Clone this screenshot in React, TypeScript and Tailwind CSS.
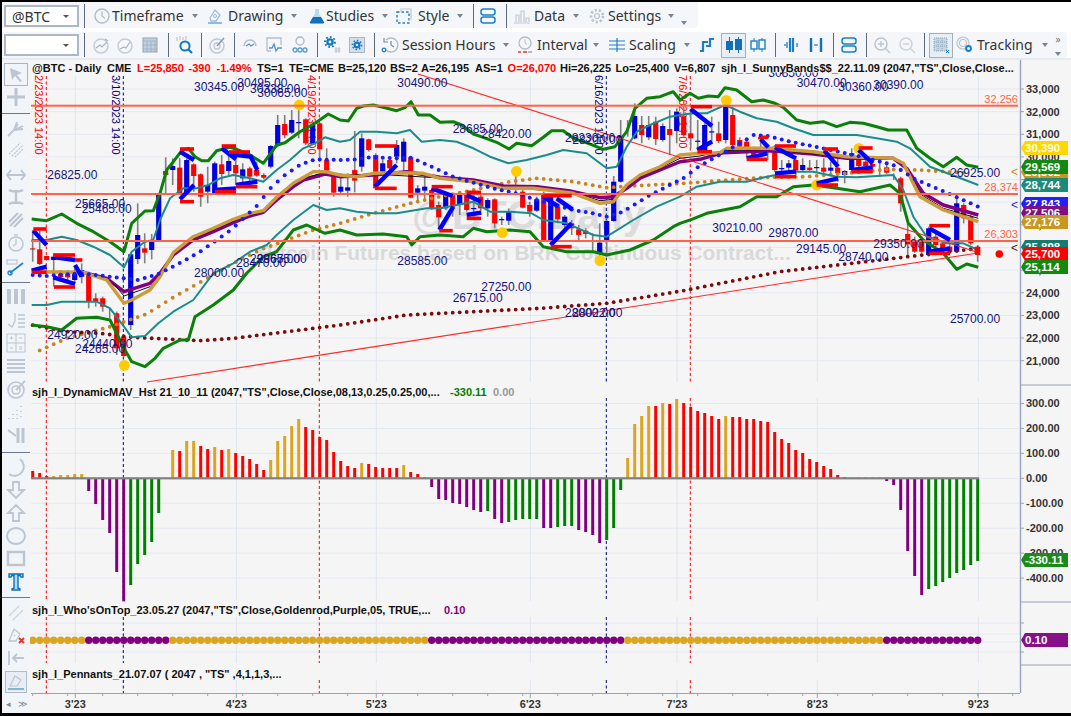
import React from "react";

type P = [number, number];
const t = (ox: number, pts: P[]): P[] => pts.map(([x, y]) => [ox + x / 3, 60 + y / 3]);
const poly = (...a: P[][]) => a.flat().map(([x, y]) => `${x.toFixed(1)},${y.toFixed(1)}`).join(" ");
const bx = (i: number) => 32.7 + 7 * i;

const greenUp: P[][] = [
  t(0, [[95,477],[140,482],[185,462],[230,490],[280,515],[330,545],[372,575],[395,490],[435,453],[460,452],[480,400],[500,330],[520,305],[545,272],[565,265],[585,290],[605,302],[625,302],[650,272],[690,262],[710,268],[750,285],[790,310],[830,255],[855,248],[900,215],[945,190],[985,162]]),
  t(340, [[0,180],[25,183],[50,145],[70,138],[100,135],[135,143],[170,152],[195,143],[213,125],[235,165],[270,165],[300,187],[340,185],[365,195],[400,222],[430,232],[470,247],[507,267],[530,250],[575,257],[610,232],[635,212],[670,212],[700,235],[745,250],[790,268],[825,260],[860,215],[885,145],[920,115],[960,110],[1000,95]]),
  t(680, [[0,120],[30,100],[55,115],[85,108],[115,110],[135,83],[170,90],[215,125],[250,120],[285,130],[310,142],[350,180],[390,190],[430,185],[470,200],[510,187],[550,190],[590,200],[625,210],[680,210],[710,265],[750,295],[790,320],[830,292],[860,315],[895,322]]),
];
const tealUp: P[][] = [
  t(0, [[95,540],[140,540],[185,530],[230,540],[280,560],[330,585],[372,622],[395,575],[435,545],[460,540],[480,480],[510,415],[550,385],[590,385],[625,375],[660,355],[700,345],[750,355],[790,365],[830,330],[870,300],[910,265],[945,250],[975,232]]),
  t(340, [[0,245],[30,240],[60,215],[110,215],[170,220],[210,210],[245,245],[300,240],[350,245],[400,265],[450,290],[505,310],[560,300],[620,285],[670,270],[740,280],[800,325],[830,320],[860,260],[890,215],[930,195],[990,170]]),
  t(680, [[0,165],[40,160],[80,160],[135,135],[180,155],[230,175],[290,185],[340,205],[400,225],[460,225],[530,225],[590,235],[650,245],[690,265],[750,320],[830,350],[895,375]]),
];
const gold: P[][] = [
  t(0, [[95,635],[250,637],[320,660],[372,730],[395,720],[450,690],[480,650],[520,578],[580,530],[640,505],[700,478],[750,460],[790,452],[830,412],[880,370],[940,335],[975,335]]),
  t(340, [[0,345],[50,350],[100,340],[170,338],[250,340],[300,355],[400,365],[490,385],[580,385],[700,400],[780,430],[820,425],[860,375],[900,345],[960,320]]),
  t(680, [[0,285],[60,280],[120,278],[140,265],[270,265],[400,275],[500,290],[640,295],[670,310],[720,410],[790,450],[895,485]]),
];
const purple: P[][] = [
  t(0, [[250,637],[320,655],[372,695],[450,670],[480,640],[520,585],[580,540],[640,515],[700,488],[750,468],[790,457],[830,420],[880,380],[910,360],[975,342]]),
  t(340, [[0,350],[100,345],[200,335],[300,352],[400,360],[490,378],[590,380],[690,393],[780,413],[820,410],[860,385],[900,355],[960,330]]),
  t(680, [[0,305],[60,298],[130,278],[270,272],[400,282],[500,295],[640,295],[680,325],[730,400],[790,435],[895,465]]),
];
const black: P[][] = [
  t(0, [[340,670],[372,708],[450,680],[480,650],[520,582],[580,535],[640,510],[700,483],[750,464],[790,455],[830,416],[880,375],[910,355],[975,337]]),
  t(340, [[0,347],[100,342],[300,354],[490,382],[700,397],[780,422],[820,418],[860,380],[900,350],[960,325]]),
  t(680, [[0,295],[60,288],[130,272],[270,268],[500,292],[640,295],[675,318],[725,405],[790,445],[895,475]]),
];
const tealDn: P[][] = [
  t(0, [[95,735],[140,735],[185,725],[230,725],[290,725],[330,745],[372,800],[395,832],[435,828],[475,790],[520,755],[580,720],[640,640],[700,610],[750,575],[800,555],[830,525],[880,480],[940,435],[980,450]]),
  t(340, [[0,445],[50,455],[100,460],[170,460],[260,445],[300,445],[400,425],[450,455],[510,455],[575,460],[610,480],[680,490],[760,525],[800,530],[880,480],[950,440]]),
  t(680, [[0,410],[50,380],[120,365],[200,365],[260,350],[340,335],[400,335],[470,350],[530,352],[640,345],[670,390],[700,470],[740,530],[800,550],[850,550],[895,570]]),
];
const greenDn: P[][] = [
  t(0, [[95,795],[140,800],[185,810],[230,775],[290,772],[330,780],[372,865],[395,905],[435,920],[465,895],[490,865],[540,840],[565,840],[585,770],[640,735],[700,690],[740,640],[790,590],[830,575],[880,510],[920,495],[975,520]]),
  t(340, [[0,510],[50,525],[130,522],[200,530],[215,555],[240,530],[300,525],[370,530],[400,505],[440,515],[510,510],[570,515],[610,560],[680,575],[760,575],[800,585],[870,570],[940,540],[1000,500]]),
  t(680, [[0,490],[35,478],[80,460],[130,450],[180,440],[230,410],[290,410],[340,380],[400,375],[470,385],[540,395],[630,375],[660,400],[685,490],[730,540],[790,580],[830,628],[860,612],[895,622]]),
];

const interp = (pts: P[], from: number, to: number) => {
  const out: P[] = [];
  for (let i = from; i <= to; i++) {
    const x = bx(i);
    for (let k = 0; k < pts.length - 1; k++) {
      if (x >= pts[k][0] && x <= pts[k + 1][0]) {
        const f = (x - pts[k][0]) / (pts[k + 1][0] - pts[k][0]);
        out.push([x, pts[k][1] + f * (pts[k + 1][1] - pts[k][1])]);
        break;
      }
    }
  }
  return out;
};
const blueDots = interp([
  ...t(0, [[95,645],[135,648],[245,640],[415,660],[480,640],[560,598],[600,575],[690,512],[730,475],[770,438],[815,380],[855,345],[900,315],[945,298]]),
  ...t(340, [[0,300],[50,298],[90,292],[170,295],[215,293],[300,332],[340,350],[400,368],[460,385],[530,400],[590,420],[700,450],[760,460],[800,470],[845,457],[890,430],[930,405],[970,385]]),
  ...t(680, [[15,352],[55,320],[100,295],[180,250],[220,225],[265,228],[330,245],[430,265],[520,285],[640,315],[700,355],[770,385],[895,440]]),
], 0, 135);
const orangeDots = interp([
  ...t(0, [[100,880],[200,835],[330,800],[440,762],[520,712],[630,650],[700,610],[780,570],[860,540],[940,510]]),
  ...t(340, [[0,490],[100,460],[210,430],[300,410],[400,390],[510,365],[590,355],[700,365],[800,383],[870,378]]),
  ...t(680, [[10,370],[120,362],[260,352],[380,350],[500,340],[620,328],[720,330],[880,340]]),
], 1, 133);
const redDots = interp([
  ...t(0, [[95,795],[200,815],[300,820],[400,832],[600,842],[700,835],[820,820]]),
  ...t(340, [[0,795],[200,765],[400,755],[600,745],[800,730]]),
  ...t(680, [[10,692],[300,635],[600,600],[895,565]]),
], 0, 135);

const C: [number, "r" | "b" | "", number, number, number?, number?][] = [
  [0,"r",565,566,510,605],[1,"r",568,612,505,615],[2,"r",588,600],[3,"b",590,600,580,680],[4,"r",640,652,630,665],[5,"r",640,652,630,665],[6,"b",640,660,625,670],[7,"b",630,650,610,670],
  [8,"r",640,725,635,745],[9,"r",715,725,700,740],[10,"r",715,740,710,755],[11,"",0,0,745,775],[12,"r",760,865,755,885],[13,"r",830,888,825,892],[14,"b",583,795,580,810],[15,"b",525,597,430,612],[16,"r",565,578,520,610],[17,"b",540,570,522,598],[18,"b",405,540,400,542],[19,"r",333,345,292,400],
  [20,"b",318,330,295,375],[21,"r",323,400,295,405],[22,"b",300,400,295,405],[23,"r",313,348,310,395],[24,"r",343,410,340,440],[25,"b",375,395,320,430],[26,"b",310,400,305,405],[27,"r",313,342,285,375],[28,"b",303,333,285,345],[29,"r",315,340,290,375],
  [30,"b",328,355,310,370],[31,"r",325,350,320,375],[32,"r",330,347,305,350],[33,"r",345,353,340,358],[34,"b",258,320,255,325],[35,"b",195,258,165,262],[36,"r",192,225,165,235],[37,"b",180,218,150,222],[38,"b",186,188,150,235],[39,"r",178,250,175,255],
  [40,"b",195,250,185,255],[41,"r",190,268,188,295],[42,"r",300,332,265,340],[43,"r",345,398,340,410],
  [44,"b",380,395,340,400],[45,"b",382,392,340,410],[46,"r",330,362,213,397],[47,"b",235,320,220,335],[48,"r",238,270,236,275],[49,"r",285,385,280,390],[50,"b",310,335,300,345],[51,"r",300,325,290,345],[52,"b",255,290,240,310],[53,"b",245,305,235,335],[54,"r",292,413,290,415],
  [55,"b",385,398,375,425],[56,"b",380,392,345,425],[57,"r",390,445,385,450],[58,"r",435,472,425,505],[59,"b",405,445,400,450],[60,"r",405,440,400,470],[61,"b",405,435,395,465],[62,"r",405,450,400,455],[63,"b",444,446,405,470],[64,"r",410,445,405,465],
  [65,"b",420,445,415,470],[66,"r",418,490,415,505],[67,"b",477,479,470,495],[68,"b",455,482,445,495],[69,"",0,0,345,400],[70,"r",395,443,390,445],[71,"r",435,455,425,470],[72,"b",418,452,410,455],[73,"r",400,540,395,542],[74,"b",410,540,405,545],
  [75,"r",440,478,430,490],[76,"b",470,495,465,520],[77,"r",490,505,480,525],[78,"r",508,525,495,540],[79,"r",512,522,505,535],[80,"",0,0,520,575],[81,"b",548,580,490,590],[82,"b",483,540,480,590],[83,"b",365,483,348,485],[84,"b",228,365,180,368],[85,"",0,0,180,230],
  [86,"b",168,235,130,238],[87,"r",195,225,168,250],[88,"b",195,232,168,240],[89,"r",185,237,170,255],[90,"b",198,240,190,245],[91,"r",207,225,150,285],[92,"b",155,213,145,250],
  [93,"r",170,225,120,230],[94,"r",220,235,150,265],[95,"b",242,244,180,270],[96,"b",195,270,190,275],[97,"b",214,216,170,250],[98,"r",220,243,185,250],[99,"b",140,240,135,250],[100,"r",165,255,140,258],[101,"r",240,260,232,265],[102,"r",245,262,235,290],
  [103,"r",265,295,260,300],[104,"r",230,238,228,270],[105,"",0,0,265,300],[106,"r",260,330,255,335],[107,"b",324,326,300,335],[108,"b",310,323,300,335],[109,"r",300,332,295,345],[110,"b",315,330,295,335],[111,"r",323,330,300,335],[112,"b",321,323,300,335],
  [113,"r",323,335,295,345],[114,"b",323,332,305,345],[115,"r",323,340,290,365],[116,"b",333,345,330,370],[117,"b",280,330,265,335],[118,"r",300,318,280,322],[119,"r",305,318,290,325],[120,"r",312,320,300,325],[121,"",0,0,300,350],[122,"r",322,338,315,342],[123,"",0,0,340,360],
  [124,"r",355,430,350,455],[125,"r",522,553,490,590],[126,"r",540,575,530,578],[127,"r",545,575,540,580],[128,"b",505,585,500,590],[129,"r",530,555,510,565],[130,"r",550,565,540,570],[131,"r",560,575,550,580],[132,"b",430,575,405,578],[133,"r",435,475,430,490],[134,"r",470,550,465,555],[135,"r",560,585,555,605],
];

const redBars: [number, number, number, number][] = [];
const blues: [number, number, number, number, number][] = [];
const addR = (ox: number, a: number[][]) => a.forEach(([x1, x2, y]) => redBars.push([ox + x1 / 3, ox + x2 / 3, 60 + y / 3, 0]));
const addB = (ox: number, a: number[][]) => a.forEach(([x1, y1, x2, y2]) => blues.push([ox + x1 / 3, 60 + y1 / 3, ox + x2 / 3, 60 + y2 / 3, 0]));
addR(0, [[100,140,507],[160,225,585],[225,247,600],[162,225,681],[540,582,267],[540,582,425],[665,708,258],[687,750,276],[645,708,395],[708,772,380],[95,140,637]]);
addB(0, [[100,512,140,555],[95,632,140,620],[165,592,225,600],[225,615,245,650],[160,652,225,672],[540,275,582,300],[540,418,582,375],[665,265,708,298],[687,282,750,290],[750,285,772,330],[645,390,708,385],[708,375,772,365]]);
addR(340, [[105,170,258],[105,170,385],[275,338,380],[298,338,512],[380,423,397],[380,423,475],[610,695,407],[632,695,560]]);
addB(340, [[105,380,170,315],[275,385,338,408],[298,510,340,440],[380,405,423,425],[380,465,423,458],[610,410,655,440],[650,415,697,448],[632,555,695,490]]);
addR(680, [[32,96,140],[52,96,275],[200,262,298],[242,265,232],[285,348,258],[285,348,350],[430,474,267],[410,474,375],[536,578,264],[515,578,335],[748,810,497],[748,810,580]]);
addB(680, [[32,147,96,198],[52,270,96,245],[200,295,262,280],[242,238,265,262],[285,262,348,295],[285,340,348,335],[433,272,474,320],[410,370,474,355],[536,270,578,310],[515,330,578,322],[748,505,810,540],[748,575,810,565]]);

const circles: P[] = [...t(0, [[373,916],[898,135]]), ...t(340, [[529,334],[487,518],[780,602]]), ...t(680, [[139,121],[410,375],[537,265]])];

const H = "273r 279r 288r 288g 285g 285g 282g 282g 333p 372p 420p 459p 576p 664p 615G 552G 525G 486G 399G 297G 210g 213r 183g 183g 198r 207r 201g 210r 207g 219r 228r 237r 252r 270r 240g 183g 168g 138g 117g 141r 150r 171r 180r 216r 243r 258r 264r 249g 252r 261r 264r 264r 264r 255g 276r 282r 292r 321p 357p 360p 369p 372p 381p 390p 396p 393G 417p 429p 426G 420G 417G 417G 417G 444p 444p 441G 438G 438G 450p 456p 465p 489p 480G 444G 330G 234g 132g 108g 78g 78r 69g 72r 57g 69r 81r 93r 99r 108r 117r 108g 111r 111r 117r 117r 123r 126r 156r 177r 189r 210r 219r 237r 246r 258r 267r 285r 292r 293g 293r 293r 293r 293r 303p 315p 390p 513p 588p 645p 627G 618G 606G 594G 579G 570G 555G 543G".split(" ");
const hCol: Record<string, string> = { r: "#ff0000", g: "#daa520", p: "#800080", G: "#008000" };

const labels: [number, number, string][] = [
  ...([[142,357,"26825.00"],[225,444,"25665.00"],[245,458,"25465.00"],[582,650,"28000.00"],[708,620,"28470.00"],[750,608,"29865.00"],[770,608,"29675.00"],[142,836,"24920.00"],[247,865,"24440.00"],[225,880,"24265.00"],[582,92,"30345.00"],[712,82,"30495.00"],[750,98,"30338.00"],[772,112,"30065.00"]] as [number,number,string][]).map(([x,y,s]) => [x/3, 60+y/3, s] as [number,number,string]),
  ...([[172,82,"30490.00"],[338,218,"28685.00"],[424,235,"28420.00"],[675,245,"28230.00"],[697,252,"28200.00"],[172,614,"28585.00"],[424,694,"27250.00"],[338,727,"26715.00"],[675,770,"28000.00"],[697,770,"28022.00"]] as [number,number,string][]).map(([x,y,s]) => [340+x/3, 60+y/3, s] as [number,number,string]),
  ...([[265,52,"30850.00"],[350,82,"30470.00"],[475,92,"30360.00"],[580,88,"30390.00"],[810,350,"26925.00"],[97,515,"30210.00"],[265,532,"29870.00"],[348,578,"29145.00"],[580,565,"29350.00"],[475,602,"28740.00"],[810,788,"25700.00"]] as [number,number,string][]).map(([x,y,s]) => [680+x/3, 60+y/3, s] as [number,number,string]),
];

const segs = [[76, 382], [398, 601], [617, 663], [680, 693]];
const months: [number, string][] = [[75.3, "3'23"], [236.3, "4'23"], [376.3, "5'23"], [530.3, "6'23"], [677, "7'23"], [817.3, "8'23"], [978.3, "9'23"]];
const vmarks: [number, string, string][] = [[46.3, "#ff0000", "2/23/2023 14:00"], [123.3, "#000080", "3/10/2023 14:00"], [319.3, "#ff0000", "4/19/2023 14:00"], [606.3, "#000080", "6/16/2023 14:00"], [690.3, "#ff0000", "7/6/2023 14:00"]];
const prices = [33, 32, 31, 30, 29, 28, 27, 26, 25, 24, 23, 22, 21];
const py = (k: number) => 89 + (33 - k) * 22.64;
const hVals = [300, 200, 100, 0, -100, -200, -300, -400];
const hy = (v: number) => 478.3 - v * 0.2495;

const badges: [number, string, string, string][] = [
  [148, "#ffd700", "30,390", "#fffde0"],
  [172, "#c9971f", "29,302", "#ffffff"],
  [167, "#0f8a0f", "29,569", "#ffffff"],
  [185, "#1b8a7a", "28,744", "#ffffff"],
  [204, "#1f1fff", "27,843", "#ffffff"],
  [213, "#800f80", "27,506", "#ffffff"],
  [222, "#c9971f", "27,176", "#ffffff"],
  [247, "#177a6e", "25,898", "#ffffff"],
  [254, "#ff0000", "25,700", "#ffffff"],
  [267, "#0f8a0f", "25,114", "#ffffff"],
  [560, "#1a8a1a", "-330.11", "#ffffff"],
  [640, "#870f87", "0.10", "#ffffff"],
];

function Chart() {
  return (
    <svg width={1041} height={653} viewBox="30 60 1041 653" className="block font-['Liberation_Sans',Arial,sans-serif]">
      <rect x={30} y={60} width={1041} height={653} fill="#f5f5f5" />
      {/* grid */}
      {prices.map((k) => <line key={k} x1={31} x2={1020} y1={py(k)} y2={py(k)} stroke="#e4e8f2" />)}
      {hVals.map((v) => <line key={v} x1={31} x2={1020} y1={hy(v)} y2={hy(v)} stroke="#e4e8f2" />)}
      {[623, 634, 642, 652].map((y) => <line key={y} x1={31} x2={1020} y1={y} y2={y} stroke="#e4e8f2" />)}
      {months.map(([x]) => segs.map(([a, b]) => <line key={x + "-" + a} x1={x} x2={x} y1={a} y2={b} stroke="#e0e5f0" />))}
      {/* watermark */}
      <text x={412} y={229} fontSize={41} fontWeight={700} fill="#dcdcdc">@BTC,Daily</text>
      <text x={258} y={260} fontSize={20.9} fontWeight={700} fill="#d9d9d9">Bitcoin Futures based on BRK Continuous Contract...</text>
      {/* dashed verticals */}
      {vmarks.map(([x, c]) => segs.map(([a, b]) => <line key={x + "d" + a} x1={x} x2={x} y1={a} y2={b} stroke={c} strokeDasharray="3 2.5" />))}
      {vmarks.map(([x, c, s]) => <text key={s} transform={`translate(${x - 11.5} 75) rotate(90)`} fontSize={11} fill={c}>{s}</text>)}
      {/* candles */}
      {C.map(([i, c, a, b, w1, w2]) => (
        <g key={i}>
          {w1 !== undefined && <rect x={bx(i) - 0.8} y={60 + w1 / 3} width={1.6} height={(w2! - w1) / 3} fill="#808080" />}
          {c && <rect x={bx(i) - 2.6} y={60 + a / 3} width={5.2} height={Math.max((b - a) / 3, 1.2)} fill={c === "r" ? "#ff0000" : "#0000dd"} />}
        </g>
      ))}
      {/* dots */}
      {orangeDots.map(([x, y], i) => <circle key={i} cx={x} cy={y} r={1.9} fill="#c8831c" />)}
      {redDots.map(([x, y], i) => <circle key={i} cx={x} cy={y} r={1.9} fill="#7a0c0c" />)}
      {/* bands */}
      <polyline points={poly(...greenUp)} fill="none" stroke="#0a800a" strokeWidth={3} strokeLinejoin="round" />
      <polyline points={poly(...greenDn)} fill="none" stroke="#0a800a" strokeWidth={3} strokeLinejoin="round" />
      <polyline points={poly(...tealUp)} fill="none" stroke="#1a8c8c" strokeWidth={2} strokeLinejoin="round" />
      <polyline points={poly(...tealDn)} fill="none" stroke="#1a8c8c" strokeWidth={2} strokeLinejoin="round" />
      <polyline points={poly(...purple)} fill="none" stroke="#800080" strokeWidth={3.4} strokeLinejoin="round" />
      <polyline points={poly(...black)} fill="none" stroke="#111111" strokeWidth={1} strokeLinejoin="round" />
      <polyline points={poly(...gold)} fill="none" stroke="#cc9c3a" strokeWidth={3.4} strokeLinejoin="round" />
      {blueDots.map(([x, y], i) => <circle key={i} cx={x} cy={y} r={2} fill="#1a1aff" />)}
      {circles.map(([x, y], i) => <circle key={i} cx={x} cy={y} r={5.4} fill="#ffcc00" />)}
      {/* trend lines */}
      <line x1={418} y1={74} x2={980} y2={253} stroke="#ff2a2a" strokeWidth={1.1} />
      <line x1={147} y1={382} x2={978} y2={253} stroke="#ff2a2a" strokeWidth={1.1} />
      {/* horizontals */}
      {[105.7, 194, 241].map((y) => <rect key={y} x={31} y={y - 1} width={987} height={2} fill="#ff6347" />)}
      {/* pennants */}
      {blues.map(([a, b, c, d], i) => <line key={i} x1={a} y1={b} x2={c} y2={d} stroke="#0000ff" strokeWidth={4.4} />)}
      {redBars.map(([a, b, y], i) => <rect key={i} x={a} y={y - 1.8} width={b - a} height={3.6} fill="#ff0000" />)}
      {/* value labels */}
      {labels.map(([x, y, s], i) => <text key={i} x={x} y={y} fontSize={12} fill="#14147e">{s}</text>)}
      <rect x={31} y={60} width={989} height={12.5} fill="#f5f5f5" />
      {/* coral */}
      {([["32,256", 105.7], ["28,374", 194], ["26,303", 241]] as [string, number][]).map(([s, y]) => <text key={s} x={1018} y={y - 3} textAnchor="end" fontSize={11} fill="#ff6347">{s}</text>)}
      {/* headers */}
      <g fontSize={11} fontWeight={700} fill="#111111">
        <text y={72}>
          <tspan x={32}>@BTC - Daily</tspan><tspan x={107}>CME</tspan>
          <tspan x={137} fill="#ff0000">L=25,850</tspan><tspan x={188.6} fill="#ff0000">-390</tspan><tspan x={216.6} fill="#ff0000">-1.49%</tspan>
          <tspan x={257}>TS=1</tspan><tspan x={289}>TE=CME</tspan><tspan x={338}>B=25,120</tspan><tspan x={390}>BS=2</tspan><tspan x={421}>A=26,195</tspan><tspan x={475}>AS=1</tspan>
          <tspan x={507.6} fill="#ff0000">O=26,070</tspan><tspan x={560}>Hi=26,225</tspan><tspan x={615.5}>Lo=25,400</tspan><tspan x={674}>V=6,807</tspan>
          <tspan x={721}>sjh_I_SunnyBands$$_22.11.09 (2047,"TS",Close,Close...</tspan>
        </text>
        <text y={396}>
          <tspan x={32}>sjh_I_DynamicMAV_Hst 21_10_11 (2047,"TS",Close,Close,08,13,0.25,0.25,00,...</tspan>
          <tspan x={450} fill="#008000">-330.11</tspan><tspan x={493} fill="#999999">0.00</tspan>
        </text>
        <text y={614}>
          <tspan x={32}>sjh_I_Who'sOnTop_23.05.27 (2047,"TS",Close,Goldenrod,Purple,05,  TRUE,...</tspan>
          <tspan x={444} fill="#800080">0.10</tspan>
        </text>
        <text x={32} y={678}>sjh_I_Pennants_21.07.07 ( 2047 , "TS" ,4,1,1,3,...</text>
      </g>
      {/* histogram */}
      {H.map((s, i) => {
        const y = parseInt(s);
        const c = s[s.length - 1];
        const a = Math.min(y, 295);
        const b = Math.max(y, 295);
        return <rect key={i} x={bx(i) - 1.5} y={380 + a / 3} width={3} height={(b - a) / 3} fill={hCol[c]} />;
      })}
      <rect x={31} y={477.2} width={948} height={2.2} fill="#808080" />
      {/* dot strip */}
      {H.map((_, i) => {
        const p = (i >= 8 && i <= 19) || (i >= 57 && i <= 84) || i >= 122;
        return <circle key={i} cx={bx(i)} cy={640.3} r={3.7} fill={p ? "#800080" : "#daa520"} />;
      })}
      {/* axes */}
      <line x1={1020.5} x2={1020.5} y1={60} y2={693} stroke="#98a2b8" strokeWidth={1.4} />
      <line x1={31} x2={1020} y1={693.5} y2={693.5} stroke="#98a2b8" strokeWidth={1.2} />
      {[385, 602, 665].map((y) => <line key={y} x1={1020} x2={1071} y1={y} y2={y} stroke="#98a2b8" strokeWidth={1.2} />)}
      {Array.from({ length: 29 }, (_, k) => <line key={k} x1={32.7 + 35 * k} x2={32.7 + 35 * k} y1={693} y2={696} stroke="#98a2b8" />)}
      {months.map(([x, s]) => (
        <g key={s}>
          <line x1={x} x2={x} y1={693} y2={698} stroke="#98a2b8" />
          <text x={x} y={707.5} textAnchor="middle" fontSize={11} fontWeight={700} fill="#333333">{s}</text>
        </g>
      ))}
      {prices.map((k) => (
        <g key={k}>
          <line x1={1020} x2={1024} y1={py(k)} y2={py(k)} stroke="#98a2b8" />
          <text x={1026} y={py(k) + 4} fontSize={11} fontWeight={700} fill="#333333">{k},000</text>
        </g>
      ))}
      {hVals.map((v) => (
        <g key={v}>
          <line x1={1020} x2={1024} y1={hy(v)} y2={hy(v)} stroke="#98a2b8" />
          <text x={1026} y={hy(v) + 4} fontSize={11} fontWeight={700} fill="#333333">{v.toFixed(2)}</text>
        </g>
      ))}
      {[623, 652].map((y) => <line key={y} x1={1020} x2={1024} y1={y} y2={y} stroke="#98a2b8" />)}
      {/* markers */}
      <text x={1011} y={176} fontSize={12} fill="#cc8822">&lt;</text>
      <text x={1011} y={209} fontSize={12} fill="#2222ff">&lt;</text>
      <text x={1011} y={252} fontSize={12} fill="#551111">&lt;</text>
      <circle cx={999.3} cy={254} r={3.8} fill="#ff0000" />
      <rect x={974.5} y={247} width={5} height={7} fill="#ff0000" />
      {/* badges */}
      {badges.map(([y, c, s, tc]) => (
        <g key={s}>
          <polygon points={`1021,${y} 1025,${y - 7} 1068,${y - 7} 1068,${y + 7} 1025,${y + 7}`} fill={c} />
          <text x={1025} y={y + 4.2} fontSize={11.5} fontWeight={700} fill={tc}>{s}</text>
        </g>
      ))}
    </svg>
  );
}

/* ---------- toolbar icons ---------- */
const BLUE = "#1c7fc6";
const Ico = ({ className = "", children }: { className?: string; children: React.ReactNode }) => (
  <svg width={18} height={18} viewBox="0 0 18 18" fill="none" className={"shrink-0 " + className}>{children}</svg>
);
const Caret = ({ className = "" }: { className?: string }) => (
  <span className={"shrink-0 w-0 h-0 border-x-[3.5px] border-x-transparent border-t-[4px] border-t-[#7a8490] " + className} />
);
const Sep = ({ className = "" }: { className?: string }) => <span className={"shrink-0 w-px h-[24px] bg-[#5c6b7c] " + className} />;
const Label = ({ className = "", children }: { className?: string; children: React.ReactNode }) => (
  <span className={"shrink-0 text-[14px] leading-none text-[#333333] whitespace-nowrap " + className}>{children}</span>
);
const Combo = ({ children }: { children?: React.ReactNode }) => (
  <div className="shrink-0 w-[75px] h-[22px] ml-[2px] bg-white border-2 border-[#aeb8c4] flex items-center pl-[6px] pr-[8px] text-[14px] text-[#333333]">
    <span className="flex-1">{children}</span>
    <span className="w-0 h-0 border-x-[3px] border-x-transparent border-t-[3px] border-t-[#555555]" />
  </div>
);

function Row1() {
  return (
    <div className="h-[30px] flex bg-white shrink-0">
      <div className="w-[696px] h-[26px] pt-[2px] bg-[#f4f6fa] rounded-br-[3px] flex items-center">
        <Combo>@BTC</Combo>
        <Sep className="ml-[5px]" />
        <Ico className="ml-[8px]"><circle cx="9" cy="9" r="7" stroke="#b4bcc4" strokeWidth="1.4" /><path d="M9 4.5V9l3 2.5" stroke="#b4bcc4" strokeWidth="1.3" /></Ico>
        <Label className="ml-px w-[72px]">Timeframe</Label>
        <Caret className="ml-[8px]" />
        <Ico className="ml-[8px]"><path d="M4 11 9 3l5 5-4 6H5z" stroke="#9cbfd8" strokeWidth="1.3" /><circle cx="9" cy="9" r="1.5" stroke="#9cbfd8" /><path d="M2 16h14" stroke="#6aa9d8" strokeWidth="1.5" /></Ico>
        <Label className="ml-[4px] w-[55px]">Drawing</Label>
        <Caret className="ml-[8px]" />
        <Ico className="ml-[11px]"><path d="M7 2h4v4.5l5 8.5a1 1 0 0 1-1 1.5H3a1 1 0 0 1-1-1.5l5-8.5z" fill="#bcd8ef" /><path d="M5 10h8l3 5a1 1 0 0 1-1 1.5H3A1 1 0 0 1 2 15z" fill="#1270b8" /></Ico>
        <Label className="w-[48px]">Studies</Label>
        <Caret className="ml-[8px]" />
        <Ico className="ml-[7px]"><rect x="2" y="5" width="12" height="11" stroke={BLUE} strokeWidth="1.4" strokeDasharray="2.5 2" /><path d="M6 5V2h10v10h-2" stroke="#c2c9d2" strokeWidth="1.2" /></Ico>
        <Label className="ml-[5px] w-[31px]">Style</Label>
        <Caret className="ml-[8px]" />
        <Sep className="ml-[10px]" />
        <Ico className="ml-[5px]"><rect x="2" y="2" width="14" height="6" rx="2.5" stroke={BLUE} strokeWidth="1.5" /><rect x="2" y="10" width="14" height="6" rx="2.5" stroke={BLUE} strokeWidth="1.5" /></Ico>
        <Sep className="ml-[9px]" />
        <Ico className="ml-[6px]"><path d="M3 15V8h3v7M8 15V4h3v11M13 15v-4h3v4" stroke="#c2c9d2" strokeWidth="1.2" /><path d="M1 16h16" stroke="#c2c9d2" /></Ico>
        <Label className="ml-[3px] w-[31px]">Data</Label>
        <Caret className="ml-[8px]" />
        <Ico className="ml-[9px]"><circle cx="9" cy="9" r="2.5" stroke="#b9c1ca" strokeWidth="1.2" /><circle cx="9" cy="9" r="6" stroke="#b9c1ca" strokeWidth="2.6" strokeDasharray="2.2 2" /></Ico>
        <Label className="ml-[2px] w-[52px]">Settings</Label>
        <Caret className="ml-[8px]" />
        <Caret className="ml-[7px] self-end mb-[3px]" />
      </div>
    </div>
  );
}

function Row2() {
  return (
    <div className="h-[26px] flex bg-white shrink-0">
      <div className="w-[1065px] h-[26px] bg-[#f4f6fa] rounded-r-[3px] flex items-center">
        <Combo />
        <Sep className="ml-[5px]" />
        <Ico className="ml-[7px]"><circle cx="9" cy="10" r="7" stroke="#c4ccd5" strokeWidth="1.5" /><path d="M4 12l4-3 2 2 5-5M13 3l3 2" stroke="#a8b5c2" strokeWidth="1.2" /></Ico>
        <Ico className="ml-[6px]"><circle cx="9" cy="10" r="7" stroke="#c4ccd5" strokeWidth="1.5" /><path d="M4 13l4-2 2 1 4-6" stroke="#a8b5c2" strokeWidth="1.2" /></Ico>
        <Ico className="ml-[7px]"><rect x="2" y="2" width="14" height="14" fill="#bfd0e0" stroke="#93a4b6" /><path d="M2 5h14M6 5v11M10 5v11M14 5v11M2 9h14M2 13h14" stroke="#93a4b6" strokeWidth=".6" /></Ico>
        <Sep className="ml-[9px]" />
        <Ico className="ml-[6px]"><path d="M2 1v4M5 0v4M8 1v3M11 0v4" stroke="#b4bcc4" /><circle cx="10" cy="10" r="4.6" stroke="#1478bf" strokeWidth="2" /><path d="m13.5 13.5 3.5 3.5" stroke="#1478bf" strokeWidth="2.2" /></Ico>
        <Sep className="ml-[8px]" />
        <Ico className="ml-[6px]"><circle cx="9" cy="10" r="7" stroke="#c0c8d1" strokeWidth="1.5" /><circle cx="9" cy="10" r="3" stroke="#c0c8d1" strokeWidth="1.3" /><path d="m9 10 7-8" stroke="#7f9cb5" strokeWidth="1.5" /></Ico>
        <Sep className="ml-[8px]" />
        <Ico className="ml-[6px]"><path d="M3 10a6 6 0 0 1 12 0" stroke="#b4c0cb" strokeWidth="1.5" /><path d="M5 10l3-2 2 2 3-2" stroke="#4f93c9" strokeWidth="1.2" /></Ico>
        <Ico className="ml-[6px]"><path d="M2 15V2h14v7M2 15h4" stroke="#b4c0cb" strokeWidth="1.3" /><path d="M4 12h3l2-4 2 7 2-3h4" stroke="#4f93c9" strokeWidth="1.3" /></Ico>
        <Ico className="ml-[8px]"><circle cx="9" cy="5" r="4" stroke="#a9b8c6" strokeWidth="1.3" /><circle cx="4" cy="14" r="2" stroke="#5b9ccf" strokeWidth="1.3" /><circle cx="9" cy="14" r="2" stroke="#5b9ccf" strokeWidth="1.3" /><circle cx="14" cy="14" r="2" stroke="#5b9ccf" strokeWidth="1.3" /></Ico>
        <Sep className="ml-[8px]" />
        <Ico className="ml-[5px]"><circle cx="7" cy="6" r="2.6" stroke="#1478bf" strokeWidth="2.4" /><circle cx="7" cy="6" r="5" stroke="#1478bf" strokeWidth="1.8" strokeDasharray="1.8 2" /><path d="M13 11v6M16 11v6M11.5 13h6M11.5 15h6" stroke="#b4bcc4" strokeWidth=".8" /></Ico>
        <Ico className="ml-[7px]"><rect x="1.5" y="1.5" width="15" height="15" fill="#d5dfe9" stroke="#a9b6c3" /><circle cx="9" cy="9" r="2.4" stroke="#1478bf" strokeWidth="2.2" /><circle cx="9" cy="9" r="4.6" stroke="#1478bf" strokeWidth="1.5" strokeDasharray="1.5 2" /></Ico>
        <Sep className="ml-[8px]" />
        <Ico className="ml-[6px]"><path d="M5 4a7 7 0 1 1 0 10" stroke="#b4bcc4" strokeWidth="1.4" /><path d="M3 2v4h4M10 5v4l3 2" stroke="#7d8a97" strokeWidth="1.2" /><circle cx="3" cy="14" r="1.8" stroke={BLUE} strokeWidth="1.3" /></Ico>
        <Label className="ml-[3px] w-[93px]">Session Hours</Label>
        <Caret className="ml-[8px]" />
        <Ico className="ml-[7px]"><circle cx="9" cy="7" r="6" stroke="#b4bcc4" strokeWidth="1.3" /><path d="M9 3.5V7l2 1.5" stroke="#b4bcc4" /><path d="M2 16h3M7 16h4" stroke="#e0392f" strokeWidth="1.4" /><path d="M12 16h4" stroke="#9aa5b0" strokeWidth="1.4" /></Ico>
        <Label className="ml-[3px] w-[48px]">Interval</Label>
        <Caret className="ml-[8px]" />
        <Ico className="ml-[9px]"><path d="M1 5h16M1 9h16M1 13h16M9 2v14" stroke={BLUE} strokeWidth="1.2" /></Ico>
        <Label className="ml-[3px] w-[47px]">Scaling</Label>
        <Caret className="ml-[8px]" />
        <Ico className="ml-[8px]"><path d="M2 15h3V6h5M8 10h4V3h4" stroke={BLUE} strokeWidth="2.2" /></Ico>
        <div className="shrink-0 ml-[5px] w-[25px] h-[25px] border border-[#9fb0c2] bg-[#e8eef5] flex items-center justify-center">
          <svg width={20} height={18} viewBox="0 0 20 18"><path d="M5.5 1v16M14.5 1v16" stroke="#1270b8" /><rect x="2" y="5" width="7" height="9" fill="#1270b8" /><rect x="11" y="3" width="7" height="11" fill="#1270b8" /></svg>
        </div>
        <Ico className="ml-[3px]"><path d="M5 2v14M13 2v14" stroke={BLUE} /><rect x="2" y="5" width="6" height="8" fill="#f4f6fa" stroke={BLUE} strokeWidth="1.4" /><rect x="10" y="4" width="6" height="9" fill="#f4f6fa" stroke={BLUE} strokeWidth="1.4" /></Ico>
        <Sep className="ml-[8px]" />
        <Ico className="ml-[6px]"><path d="M8 2v14M11 2v14" stroke={BLUE} strokeWidth="2.2" /><path d="M3 8v2M15 7v4M5 6v6" stroke={BLUE} strokeWidth="1.3" /></Ico>
        <Ico className="ml-[7px]"><path d="M4 2v14M14 2v14" stroke="#1270b8" strokeWidth="2.4" /><path d="M7 9h4" stroke={BLUE} strokeWidth="1.2" /></Ico>
        <Sep className="ml-[8px]" />
        <Ico className="ml-[6px]"><rect x="2" y="2" width="14" height="6" rx="2.5" stroke={BLUE} strokeWidth="1.5" /><rect x="2" y="10" width="14" height="6" rx="2.5" stroke={BLUE} strokeWidth="1.5" /></Ico>
        <Sep className="ml-[8px]" />
        <Ico className="ml-[6px]"><circle cx="8" cy="8" r="6" stroke="#bcc5cf" strokeWidth="1.5" /><path d="M8 5v6M5 8h6M12.5 12.5 17 17" stroke="#bcc5cf" strokeWidth="1.4" /></Ico>
        <Ico className="ml-[7px]"><circle cx="8" cy="8" r="6" stroke="#ccd3da" strokeWidth="1.5" /><path d="M5 8h6M12.5 12.5 17 17" stroke="#ccd3da" strokeWidth="1.4" /></Ico>
        <Sep className="ml-[8px]" />
        <div className="shrink-0 ml-[4px] w-[24px] h-[25px] border border-[#9fb0c2] bg-[#e8eef5] flex items-center justify-center">
          <svg width={18} height={18} viewBox="0 0 18 18"><rect x="2" y="2" width="13" height="13" fill="#c7d6e4" stroke="#8fa6bb" strokeDasharray="1 1" /><path d="M2 6h13M2 10h13M6 2v13M10 2v13" stroke="#8fa6bb" strokeDasharray="1 1" /><path d="m14 14 3 3m0-3-3 3" stroke="#1270b8" /></svg>
        </div>
        <Ico className="ml-[3px]"><circle cx="7" cy="7" r="6" stroke="#bcc5cf" strokeWidth="1.2" /><circle cx="7" cy="7" r="3.5" stroke="#bcc5cf" strokeWidth="1.2" /><circle cx="12.5" cy="12.5" r="2.4" stroke={BLUE} strokeWidth="2" /></Ico>
        <Label className="ml-[3px] w-[54px]">Tracking</Label>
        <Caret className="ml-[11px]" />
        <div className="shrink-0 ml-[5px] w-[10px] h-full flex flex-col items-center justify-between py-[2px]">
          <span className="text-[10px] leading-none text-[#777777]">»</span>
          <Caret />
        </div>
      </div>
    </div>
  );
}

/* ---------- left tools ---------- */
const S = "#bcc6d2";
const Tool = ({ className, children }: { className: string; children: React.ReactNode }) => (
  <div className={"shrink-0 flex items-center justify-center " + className}>
    <svg width={20} height={20} viewBox="0 0 20 20" fill="none">{children}</svg>
  </div>
);
const TSep = ({ className }: { className: string }) => (
  <div className={"shrink-0 flex items-center " + className}><div className="w-full h-px bg-[#6c7988]" /></div>
);

function LeftTools() {
  return (
    <div className="w-[28px] shrink-0 bg-[#f1f4f8] flex flex-col">
      <div className="shrink-0 h-[3px]" />
      <div className="shrink-0 h-[23px] mb-px mx-[2px] border border-[#a9b5c3] flex items-center justify-center">
        <svg width={18} height={18} viewBox="0 0 18 18"><path d="M3 2l12 5-5 2 5 6-2 1-5-6-3 4z" fill={S} /></svg>
      </div>
      <Tool className="h-[20px]"><path d="M10 1v18M1 10h18" stroke={S} strokeWidth="3" /></Tool>
      <TSep className="h-[12px]" />
      <Tool className="h-[18px]"><path d="M2 18l6-6 3-8M8 12l4-6M8 12l9-4M8 12l9-1" stroke={S} strokeWidth="1.8" /></Tool>
      <Tool className="h-[26px]"><path d="M3 14 14 3M6 16 17 5M9 17l8-8" stroke={S} strokeWidth="1.2" strokeDasharray="2 1" /></Tool>
      <Tool className="h-[24px]"><path d="M1 10h18M5 5l-4 5 4 5M15 5l4 5-4 5" stroke={S} strokeWidth="2" /></Tool>
      <Tool className="h-[20px]"><path d="M10 3v14M3 3c3 2 11 2 14 0M3 17c3-2 11-2 14 0" stroke={S} strokeWidth="2.4" /></Tool>
      <Tool className="h-[26px]"><path d="M3 12 12 3M4 16 16 4M8 17l9-9" stroke={S} strokeWidth="2.2" /></Tool>
      <Tool className="h-[20px]"><circle cx="10" cy="11" r="7" stroke={S} strokeWidth="1.5" /><path d="M8 2h4M10 6v5l-3 2" stroke={S} strokeWidth="1.3" /></Tool>
      <Tool className="h-[28px]"><rect x="1" y="3" width="10" height="4" stroke={S} strokeWidth="1.2" /><path d="m4 16 13-10" stroke="#1c7fc6" strokeWidth="1.6" /><circle cx="4" cy="16" r="2" stroke="#1c7fc6" strokeWidth="1.3" /></Tool>
      <TSep className="h-[2px]" />
      <Tool className="h-[28px]"><path d="M3 2v15M10 2v15M17 2v15" stroke={S} strokeWidth="4" /></Tool>
      <Tool className="h-[18px]"><path d="M2 14l4 3 3-6V3M12 5h7M12 9h7M12 13h7M12 17h7" stroke={S} strokeWidth="1.3" /></Tool>
      <Tool className="h-[28px]"><rect x="1" y="1" width="18" height="18" stroke={S} /><path d="M10 1v18M1 10h18M4 5h3M5.5 3.5v3M13 5h3M4 15h3M13 14h3M13 16h3" stroke={S} /></Tool>
      <Tool className="h-[18px]"><path d="M1 4h18M1 8h18M1 12h18M1 16h18" stroke={S} strokeWidth="2" /></Tool>
      <Tool className="h-[28px]"><circle cx="10" cy="11" r="8" stroke={S} strokeWidth="1.6" /><circle cx="10" cy="11" r="4" stroke={S} strokeWidth="1.6" /><path d="m10 11 9-9" stroke={S} strokeWidth="1.8" /></Tool>
      <Tool className="h-[18px]"><path d="M3 16v1M7 12v1M7 16v1M11 8v1M11 12v1M11 16v1M15 4v1M15 9v1M15 14v1" stroke={S} strokeWidth="1.6" /></Tool>
      <Tool className="h-[28px]"><path d="M2 5l8 6" stroke={S} strokeWidth="2" /><path d="M12 3v15M17 3v15" stroke={S} strokeWidth="3" /></Tool>
      <TSep className="h-[6px]" />
      <Tool className="h-[24px]"><path d="M14 2a9 9 0 0 1-11 15" stroke={S} strokeWidth="2" /></Tool>
      <Tool className="h-[22px]"><path d="M7 2h6v8h5l-8 8-8-8h5z" stroke={S} strokeWidth="1.8" /></Tool>
      <Tool className="h-[24px]"><path d="M7 18h6v-8h5l-8-8-8 8h5z" stroke={S} strokeWidth="1.8" /></Tool>
      <Tool className="h-[22px]"><ellipse cx="10" cy="10" rx="9" ry="8" stroke={S} strokeWidth="2" /></Tool>
      <Tool className="h-[22px]"><rect x="2" y="4" width="16" height="13" stroke={S} strokeWidth="2.4" /></Tool>
      <Tool className="h-[26px]"><path d="M3 2h14v3h-2l-1-1.5H12V16l2 1v1H6v-1l2-1V3.5H6L5 5H3z" fill="#aeddf5" stroke="#1270b8" strokeWidth="1.4" /></Tool>
      <TSep className="h-[4px]" />
      <Tool className="h-[28px]"><path d="M3 13 13 3M7 17 17 7" stroke="#cfd6de" strokeWidth="1.4" /></Tool>
      <Tool className="h-[18px]"><path d="M3 15 8 3l6 5-4 7zM8 9l1 1" stroke={S} strokeWidth="1.3" /><path d="m13 12 5 5m0-5-5 5" stroke="#e8302a" strokeWidth="1.8" /></Tool>
      <Tool className="h-[26px]"><path d="M3 3v14M18 10H7M11 6l-4 4 4 4" stroke={S} strokeWidth="1.8" /></Tool>
      <div className="shrink-0 h-[22px] mx-[3px] border border-[#b0bcc9] bg-[#e9eef4] flex items-center justify-center">
        <svg width={18} height={18} viewBox="0 0 18 18" fill="none"><path d="M3 13 8 3l6 4-4 6z" stroke={S} strokeWidth="1.2" /><path d="M1 16h16" stroke="#1c7fc6" /></svg>
      </div>
      <div className="flex-1 flex items-center justify-center gap-[7px] text-[9px] leading-none text-[#808a96]">
        <span>◂</span>
        <span>≫</span>
      </div>
    </div>
  );
}

export default function App() {
  return (
    <div className="w-[1071px] h-[716px] bg-black pt-[2px] pb-[3px] pl-[2px] flex flex-col overflow-hidden font-['Noto_Sans','Open_Sans',sans-serif]">
      <Row1 />
      <Row2 />
      <div className="h-[2px] shrink-0 bg-[#e6ebf2]" />
      <div className="flex-1 flex min-h-0">
        <LeftTools />
        <Chart />
      </div>
    </div>
  );
}
